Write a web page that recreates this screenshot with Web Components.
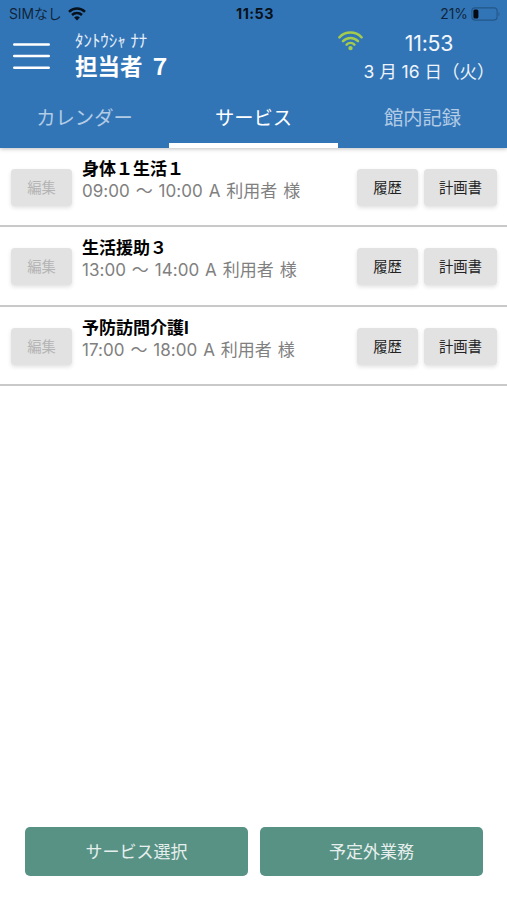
<!DOCTYPE html>
<html lang="ja">
<head>
<meta charset="utf-8">
<meta name="viewport" content="width=device-width, initial-scale=1">
<title>サービス</title>
<style>
  html, body {
    margin: 0;
    height: 100%;
  }

  body {
    --blue: #3275b7;
    --green: #579284;
    --grey: #e2e2e2;
    background: #fff;
    font-family: Inter, "Noto Sans CJK JP", sans-serif;
  }
</style>
</head>
<body>
<service-app></service-app>

<script>
const define = (name, style, html, setup) => {
  const template = document.createElement('template')
  template.innerHTML = `<style>${style}</style>${html}`

  customElements.define(name, class extends HTMLElement {
    constructor() {
      super()
      const shadow = this.attachShadow({ mode: 'open' })
      shadow.append(template.content.cloneNode(true))
      if (setup) setup(this, shadow)
    }
  })
}

define('status-bar', `
  :host {
    display: grid;
    grid-template-columns: 1fr auto 1fr;
    align-items: center;
    height: 27px;
    padding: 0 6px 0 9px;
    box-sizing: border-box;
    color: #10253b;
    font-size: 13.9px;
    line-height: 28px;
  }

  .carrier, .battery {
    display: flex;
    align-items: center;
  }

  .carrier {
    gap: 7px;
    letter-spacing: -0.1px;
  }

  .battery {
    justify-content: flex-end;
    gap: 3px;
  }

  .time {
    font-size: 14.3px;
    font-weight: 700;
    letter-spacing: 0.5px;
    color: #07111c;
  }

  svg {
    display: block;
  }
`, `
  <div class="carrier">
    <span>SIMなし</span>
    <svg width="18" height="14" viewBox="0 0 18 14" fill="none" stroke="#07111c" stroke-width="2.5">
      <path d="M1 4.8a11.5 11.5 0 0 1 16 0"/>
      <path d="M4 8a7.2 7.2 0 0 1 10 0"/>
      <path d="M9 13.5 6.1 10.6a4.2 4.2 0 0 1 5.8 0z" fill="#07111c" stroke="none"/>
    </svg>
  </div>
  <div class="time">11:53</div>
  <div class="battery">
    <span>21%</span>
    <svg width="30" height="14" viewBox="0 0 30 14">
      <rect x=".9" y=".9" width="25.2" height="12.2" rx="3" fill="none" stroke="#245787" stroke-width="1.1"/>
      <rect x="2.4" y="2.5" width="5" height="9" rx="1.5" fill="#050b12"/>
      <path d="M27.5 4.7q2 2.3 0 4.6z" fill="#245787"/>
    </svg>
  </div>
`)

define('app-header', `
  :host {
    display: flex;
    height: 61px;
    padding-right: 12px;
    box-sizing: border-box;
    color: #fff;
  }

  .menu {
    flex: none;
    width: 75px;
    padding: 15px 0 0 12px;
    box-sizing: border-box;
  }

  .person {
    flex: 1;
    padding-top: 6px;
  }

  .kana {
    height: 17px;
    font-size: 16.9px;
    line-height: 17px;
    color: #e6eef7;
  }

  .name {
    font-size: 22.5px;
    line-height: 34px;
    font-weight: 700;
    word-spacing: 1px;
  }

  .wifi {
    padding: 4px 0 0;
    width: 25px;
  }

  .clock {
    width: 132px;
    padding-top: 4px;
    text-align: center;
  }

  .time {
    font-size: 21.3px;
    line-height: 24px;
    color: #f2f7fc;
    letter-spacing: -0.2px;
  }

  .date {
    padding-top: 2px;
    font-size: 17.5px;
    line-height: 30px;
    white-space: nowrap;
    color: #eef4fa;
  }

  svg {
    display: block;
  }
`, `
  <div class="menu">
    <svg width="39" height="28" viewBox="0 0 39 28" stroke="#fff" stroke-width="2.6" stroke-linecap="round">
      <path d="M2.3 2.5h34.4M2.3 14h34.4M2.3 25.7h34.4"/>
    </svg>
  </div>
  <div class="person">
    <div class="kana"><slot name="kana"></slot></div>
    <div class="name"><slot name="name"></slot></div>
  </div>
  <div class="wifi">
    <svg width="25" height="20" viewBox="0 0 25 20" fill="none" stroke="#a5cb4c" stroke-width="2.5" stroke-linecap="round">
      <path d="M1.4 6.3a15.5 15.5 0 0 1 22.2 0"/>
      <path d="M5 10.2a10.5 10.5 0 0 1 15 0"/>
      <path d="M8.6 13.6a5.6 5.6 0 0 1 7.8 0"/>
      <circle cx="12.5" cy="17.1" r="2.2" fill="#a5cb4c" stroke="none"/>
    </svg>
  </div>
  <div class="clock">
    <div class="time"><slot name="time"></slot></div>
    <div class="date"><slot name="date"></slot></div>
  </div>
`)

define('tab-bar', `
  :host {
    display: grid;
    grid-template-columns: repeat(3, 1fr);
    height: 60px;
  }
`, `<slot></slot>`)

define('tab-item', `
  :host {
    padding-top: 15px;
    border-bottom: 5px solid transparent;
    text-align: center;
    font-size: 19.3px;
    line-height: 30px;
    color: #b3cce5;
  }

  :host([active]) {
    border-color: #fff;
    color: #fff;
  }
`, `<slot></slot>`)

define('grey-button', `
  :host {
    display: block;
    flex: none;
    width: 61px;
    height: 37px;
    border-radius: 4px;
    background: var(--grey);
    box-shadow: 0 2px 4px rgba(0, 0, 0, .12);
    text-align: center;
    font-size: 14.3px;
    line-height: 37px;
    color: #222;
  }

  :host([wide]) {
    width: 73px;
  }

  :host([disabled]) {
    color: #b4b4b4;
  }
`, `<slot></slot>`)

define('service-row', `
  :host {
    display: flex;
    height: 79.4px;
    padding: 21px 10px 0 11px;
    box-sizing: border-box;
    border-bottom: 2px solid #c9c9c9;
  }

  .text {
    flex: 1;
    margin: -11px 0 0 10px;
    white-space: nowrap;
  }

  .title {
    font-size: 17px;
    line-height: 22px;
    font-weight: 700;
    color: #000;
  }

  .detail {
    font-size: 17px;
    line-height: 22px;
    letter-spacing: 0.05px;
    word-spacing: 1px;
    color: #808080;
  }

  .buttons {
    display: flex;
    gap: 6px;
  }
`, `
  <grey-button disabled>編集</grey-button>
  <div class="text">
    <div class="title"></div>
    <div class="detail"><slot></slot></div>
  </div>
  <div class="buttons">
    <grey-button>履歴</grey-button>
    <grey-button wide>計画書</grey-button>
  </div>
`, (host, shadow) => {
  shadow.querySelector('.title').textContent = host.getAttribute('name')
})

define('action-button', `
  :host {
    flex: 1;
    height: 49px;
    border-radius: 5px;
    background: var(--green);
    text-align: center;
    font-size: 17px;
    line-height: 51px;
    color: #e6efed;
  }
`, `<slot></slot>`)

define('service-app', `
  :host {
    display: flex;
    flex-direction: column;
    height: 100%;
    min-height: 900px;
  }

  header {
    background: var(--blue);
    box-shadow: 0 1px 4px rgba(0, 0, 0, .25);
  }

  main {
    flex: 1;
  }

  footer {
    display: flex;
    gap: 12px;
    padding: 0 24px 24px 25px;
  }
`, `
  <header>
    <status-bar></status-bar>
    <app-header>
      <span slot="kana">ﾀﾝﾄｳｼｬ ﾅﾅ</span>
      <span slot="name">担当者 ７</span>
      <span slot="time">11:53</span>
      <span slot="date">3 月 16 日（火）</span>
    </app-header>
    <tab-bar>
      <tab-item>カレンダー</tab-item>
      <tab-item active>サービス</tab-item>
      <tab-item>館内記録</tab-item>
    </tab-bar>
  </header>
  <main>
    <service-row name="身体１生活１">09:00 〜 10:00 A 利用者 様</service-row>
    <service-row name="生活援助３">13:00 〜 14:00 A 利用者 様</service-row>
    <service-row name="予防訪問介護I">17:00 〜 18:00 A 利用者 様</service-row>
  </main>
  <footer>
    <action-button>サービス選択</action-button>
    <action-button>予定外業務</action-button>
  </footer>
`)
</script>
</body>
</html>
